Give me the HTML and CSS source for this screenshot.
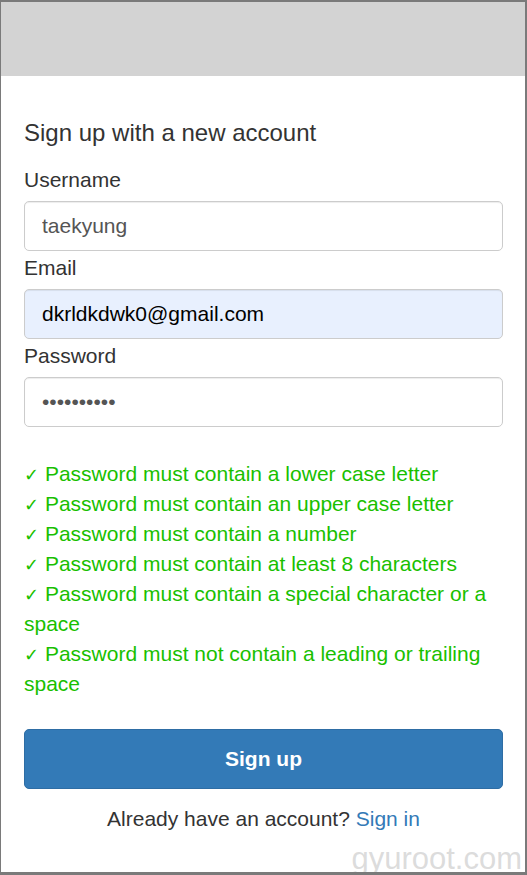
FILE: index.html
```html
<!DOCTYPE html>
<html>
<head>
<meta charset="utf-8">
<link rel="stylesheet" href="styles.css">
</head>
<body>
<div class="frame">
  <div class="banner"></div>
  <div class="content">
    <h1 class="title">Sign up with a new account</h1>
    <form class="form">
      <label class="label label-first">Username</label>
      <input class="input" type="text" value="taekyung">
      <label class="label">Email</label>
      <input class="input input-autofill" type="text" value="dkrldkdwk0@gmail.com">
      <label class="label">Password</label>
      <input class="input" type="password" value="abcdefghij">
      <ul class="checks">
        <li class="check"><span class="tick">✓</span> Password must contain a lower case letter</li>
        <li class="check"><span class="tick">✓</span> Password must contain an upper case letter</li>
        <li class="check"><span class="tick">✓</span> Password must contain a number</li>
        <li class="check"><span class="tick">✓</span> Password must contain at least 8 characters</li>
        <li class="check"><span class="tick">✓</span> Password must contain a special character or a space</li>
        <li class="check"><span class="tick">✓</span> Password must not contain a leading or trailing space</li>
      </ul>
      <button class="btn" type="button">Sign up</button>
    </form>
    <p class="footer">Already have an account? <a class="link" href="#">Sign in</a></p>
  </div>
  <div class="watermark">gyuroot.com</div>
</div>
</body>
</html>
```

FILE: styles.css
```css
html, body {
  margin: 0;
  padding: 0;
  background: #fff;
}
.frame {
  position: relative;
  box-sizing: border-box;
  width: 527px;
  height: 875px;
  border-style: solid;
  border-color: #7a7a7a;
  border-width: 2px 2px 3px 1px;
  overflow: hidden;
  background: #fff;
  font-family: "Liberation Sans", Arial, sans-serif;
  color: #333;
}
.banner {
  height: 74px;
  background: #d3d3d3;
}
.content {
  padding: 0 22px 0 23px;
}
.title {
  margin: 42px 0 0 0;
  font-size: 24px;
  font-weight: normal;
  line-height: 30px;
  color: #333;
}
.form {
  display: flex;
  flex-direction: column;
  margin: 0;
}
.label {
  display: block;
  font-size: 21px;
  line-height: 30px;
  margin: 2px 0 6px 0;
  color: #333;
}
.label-first {
  margin-top: 17px;
}
.input {
  box-sizing: border-box;
  width: 100%;
  height: 50px;
  border: 1px solid #ccc;
  border-radius: 5px;
  padding: 0 17px;
  font-family: "Liberation Sans", Arial, sans-serif;
  font-size: 21px;
  color: #555;
  background: #fff;
  box-shadow: inset 0 1px 1px rgba(0,0,0,0.075);
  outline: none;
}
.input-autofill {
  background: #e8f0fe;
  color: #000;
}
.checks {
  list-style: none;
  margin: 32px 0 0 0;
  padding: 0;
  font-size: 21px;
  line-height: 30px;
  color: #19bf00;
}
.check {
  line-height: 30px;
}
.tick {
  font-family: "DejaVu Sans", sans-serif;
  font-size: 18px;
  line-height: 1;
}
.btn {
  margin-top: 30px;
  height: 60px;
  width: 100%;
  border: 1px solid #2e6da4;
  border-radius: 5px;
  background: #337ab7;
  color: #fff;
  font-family: "Liberation Sans", Arial, sans-serif;
  font-size: 21px;
  font-weight: bold;
}
.footer {
  margin: 15px 0 0 0;
  text-align: center;
  font-size: 21px;
  line-height: 30px;
  color: #333;
}
.link {
  color: #337ab7;
  text-decoration: none;
}
.watermark {
  position: absolute;
  right: 3px;
  bottom: -2px;
  font-family: "Liberation Sans", Arial, sans-serif;
  font-size: 31px;
  line-height: 31px;
  color: rgba(190, 190, 190, 0.55);
  pointer-events: none;
}
```
